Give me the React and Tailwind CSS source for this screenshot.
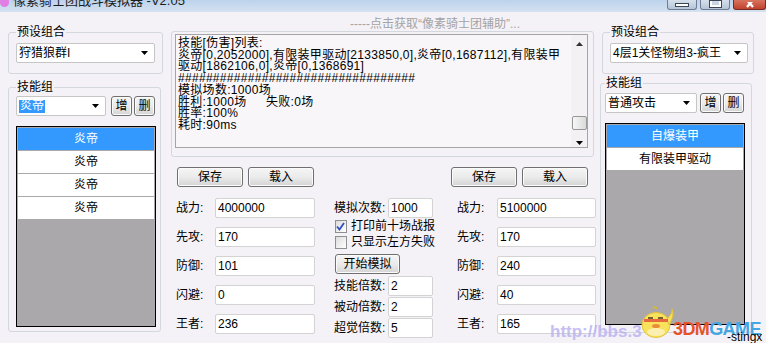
import React from "react";

const FONT = "font-['Liberation_Sans','Noto_Sans_CJK_SC',sans-serif]";

const LOG_LINES = [
  "技能[伤害]列表:",
  "炎帝[0,2052000],有限装甲驱动[2133850,0],炎帝[0,1687112],有限装甲",
  "驱动[1862106,0],炎帝[0,1368691]",
  "#".repeat(34),
  "模拟场数:1000场",
];

function Arrow() {
  return (
    <svg width="7" height="4" viewBox="0 0 7 4">
      <polygon points="0,0 7,0 3.5,4" fill="#000" />
    </svg>
  );
}

function Btn({ children, className = "" }) {
  return (
    <div
      className={`flex h-[20px] shrink-0 items-center justify-center rounded-[3px] border border-[#707070] bg-gradient-to-b from-[#f5f5f5] via-[#ebebeb] to-[#d4d4d4] text-[12px] text-black shadow-[inset_0_0_0_1px_#fbfbfb] ${className}`}
    >
      {children}
    </div>
  );
}

function Combo({ children, className = "" }) {
  return (
    <div
      className={`flex h-[20px] items-center justify-between rounded-[2px] border border-[#c6c6c6] bg-white pl-[2px] pr-[6px] text-[12px] ${className}`}
    >
      <span className="whitespace-nowrap">{children}</span>
      <Arrow />
    </div>
  );
}

function Field({ label, value, labelW, inputW }) {
  return (
    <div className="flex h-[20px] items-center">
      <span className="shrink-0 text-[12px]" style={{ width: labelW }}>
        {label}
      </span>
      <div
        className="h-[20px] rounded-[2px] border border-[#d3d3d3] bg-white pl-[2px] text-[12px] leading-[18px]"
        style={{ width: inputW }}
      >
        {value}
      </div>
    </div>
  );
}

function ListBox({ items, className = "" }) {
  return (
    <div className={`border border-black bg-[#aaa8ab] p-[1px] ${className}`}>
      <div className="flex flex-col gap-[1px]">
        {items.map((item, i) => (
          <div
            key={i}
            className={`flex h-[22px] items-center justify-center text-[12px] ${
              i === 0 ? "bg-[#3399ff] text-white" : "bg-white text-black"
            }`}
          >
            {item}
          </div>
        ))}
      </div>
    </div>
  );
}

function CheckRow({ checked, children }) {
  return (
    <div className="flex h-[16px] items-center pl-[1px]">
      <div className="flex h-[13px] w-[13px] items-center justify-center border border-[#8e8f8f] bg-gradient-to-br from-[#dcdcdc] to-[#ffffff]">
        {checked && (
          <svg width="9" height="9" viewBox="0 0 9 9">
            <path d="M1 4.5 L3.5 7.5 L8 1" fill="none" stroke="#2b4fc4" strokeWidth="1.8" />
          </svg>
        )}
      </div>
      <span className="ml-[4px] whitespace-nowrap text-[12px]">{children}</span>
    </div>
  );
}

function Chick() {
  return (
    <svg width="36" height="34" viewBox="0 0 36 34">
      <path d="M14 4 Q16 0 18 4" fill="none" stroke="#d9b92f" strokeWidth="1.5" />
      <ellipse cx="17" cy="20" rx="14" ry="12.5" fill="#f8e25c" stroke="#e4c33c" />
      <path d="M28 14 Q34 8 33 4 Q36 10 30 20 Z" fill="#f8e25c" stroke="#e4c33c" />
      <rect x="5" y="14" width="24" height="3" fill="#e4553a" opacity="0.85" />
      <path d="M9 13 L14 13 M19 13 L24 13" stroke="#4a3a20" strokeWidth="1.4" />
      <ellipse cx="17" cy="21" rx="4" ry="2" fill="#e98c3a" />
      <ellipse cx="17" cy="27" rx="9" ry="4" fill="#fbf0b0" />
    </svg>
  );
}

export default function App() {
  return (
    <div
      className={`relative h-[343px] w-[766px] overflow-hidden bg-[#f5f2f7] text-black ${FONT}`}
    >
      {/* title bar, top cut off */}
      <div className="flex h-[12px] overflow-hidden bg-gradient-to-b from-[#bcd2eb] to-[#d5e2f1]">
        <div className="-mt-[3px] h-[10px] w-[9px] shrink-0 rounded-full bg-[#e27de4]" />
        <div className="-mt-[7px] ml-[4px] whitespace-nowrap text-[13px] leading-[15px] text-[#1c1c1c]">
          像素骑士团战斗模拟器 -V2.05
        </div>
        <div className="flex-1" />
        <div className="flex items-start gap-[3px]">
          <div className="flex h-[10px] w-[30px] items-end justify-center rounded-b-[3px] border border-t-0 border-[#6e7d91] bg-gradient-to-b from-[#d6e0ec] to-[#b5c5d8] pb-[2px]">
            <div className="h-[4px] w-[14px] border border-[#3b4656] bg-white" />
          </div>
          <div className="flex h-[10px] w-[30px] items-end justify-center rounded-b-[3px] border border-t-0 border-[#6e7d91] bg-gradient-to-b from-[#d6e0ec] to-[#b5c5d8] pb-[2px]">
            <div className="h-[6px] w-[11px] border-[2px] border-t-0 border-white shadow-[0_0_0_1px_#3b4656]" />
          </div>
          <div className="flex h-[10px] w-[33px] items-end justify-center rounded-b-[3px] border border-t-0 border-[#7a2a20] bg-gradient-to-b from-[#d8735f] to-[#c0412c] pb-[1px]">
            <svg width="12" height="6" viewBox="0 0 12 6">
              <path d="M2 -3 L9 5 M10 -3 L3 5" stroke="#fff" strokeWidth="2.4" />
            </svg>
          </div>
        </div>
      </div>

      <div className="flex">
        {/* left column */}
        <div className="ml-[8px] flex w-[155px] shrink-0 flex-col">
          <fieldset className="mt-[13px] w-[155px] rounded-[3px] border border-[#d3d8df] pb-[10px] pl-[7px] pr-[7px] pt-[4px]">
            <legend className="px-[1px] text-[12px] leading-[14px]">预设组合</legend>
            <Combo className="w-[139px]">狩猎狼群I</Combo>
          </fieldset>
          <fieldset className="mt-[6px] w-[153px] rounded-[3px] border border-[#d3d8df] pb-[4px] pl-[7px] pr-[4px] pt-[2px]">
            <legend className="px-[1px] text-[12px] leading-[14px]">技能组</legend>
            <div className="flex">
              <div className="flex h-[20px] w-[90px] items-center justify-between rounded-[2px] border border-[#c6c6c6] bg-white pl-[2px] pr-[6px] text-[12px]">
                <span className="bg-[#3399ff] px-[1px] leading-[13px] text-white">炎帝</span>
                <Arrow />
              </div>
              <Btn className="ml-[5px] w-[21px]">增</Btn>
              <Btn className="ml-[2px] w-[21px] from-[#e4e4e4] to-[#cfcfcf]">删</Btn>
            </div>
            <ListBox
              className="mt-[10px] h-[201px] w-[140px]"
              items={["炎帝", "炎帝", "炎帝", "炎帝"]}
            />
          </fieldset>
        </div>

        {/* center column */}
        <div className="ml-[8px] flex w-[426px] shrink-0 flex-col">
          <div className="mt-[5px] h-[14px] whitespace-nowrap pl-[179px] text-[12px] leading-[14px] text-[#a3a3a3]">
            -----点击获取“像素骑士团辅助”...
          </div>
          <div className="h-[126px] w-[423px] rounded-[3px] border border-[#d3d8df] pl-[3px] pr-[5px] pt-[2px]">
            <div className="flex h-[114px] w-[413px] border border-[#a5a5a5] bg-[#f8f6f9]">
              <div className="w-[396px] overflow-hidden whitespace-nowrap pl-[2px] pt-[3px] text-[12px] leading-[11.7px] tracking-[0.3px]">
                {LOG_LINES.map((line, i) => (
                  <div key={i}>{line}</div>
                ))}
                <div>
                  <span className="inline-block w-[88px]">胜利:1000场</span>
                  失败:0场
                </div>
                <div>胜率:100%</div>
                <div>耗时:90ms</div>
              </div>
              <div className="flex w-[16px] flex-col items-center bg-[#f3f1f4]">
                <div className="mt-[7px]">
                  <svg width="7" height="4" viewBox="0 0 7 4">
                    <polygon points="3.5,0 7,4 0,4" fill="#333" />
                  </svg>
                </div>
                <div className="mt-[70px] h-[14px] w-[15px] rounded-[2px] border border-[#979797] bg-gradient-to-r from-[#f7f7f7] to-[#dadada]" />
                <div className="mt-[11px]">
                  <Arrow />
                </div>
              </div>
            </div>
          </div>

          <div className="mt-[10px] flex pl-[5px]">
            {/* A */}
            <div className="flex w-[139px] shrink-0 flex-col">
              <div className="flex gap-[5px] pl-[1px]">
                <Btn className="w-[66px]">保存</Btn>
                <Btn className="w-[66px]">载入</Btn>
              </div>
              <div className="mt-[11px] flex flex-col gap-[9px]">
                <Field label="战力:" value="4000000" labelW={39} inputW={100} />
                <Field label="先攻:" value="170" labelW={39} inputW={100} />
                <Field label="防御:" value="101" labelW={39} inputW={100} />
                <Field label="闪避:" value="0" labelW={39} inputW={100} />
                <Field label="王者:" value="236" labelW={39} inputW={100} />
              </div>
            </div>

            {/* B */}
            <div className="ml-[19px] flex w-[101px] shrink-0 flex-col pt-[31px]">
              <Field label="模拟次数:" value="1000" labelW={54} inputW={45} />
              <CheckRow checked>打印前十场战报</CheckRow>
              <CheckRow>只显示左方失败</CheckRow>
              <Btn className="ml-[1px] mt-[4px] w-[65px] border-[#3c7fb1] from-[#eef5fb] via-[#e0ecf6] to-[#c9dced]">
                开始模拟
              </Btn>
              <div className="mt-[2px] flex flex-col gap-[1px]">
                <Field label="技能倍数:" value="2" labelW={54} inputW={45} />
                <Field label="被动倍数:" value="2" labelW={54} inputW={45} />
                <Field label="超觉倍数:" value="5" labelW={54} inputW={45} />
              </div>
            </div>

            {/* C */}
            <div className="ml-[16px] flex w-[146px] shrink-0 flex-col">
              <div className="flex gap-[5px]">
                <Btn className="w-[66px]">保存</Btn>
                <Btn className="w-[66px]">载入</Btn>
              </div>
              <div className="mt-[11px] flex flex-col gap-[9px] pl-[6px]">
                <Field label="战力:" value="5100000" labelW={40} inputW={99} />
                <Field label="先攻:" value="170" labelW={40} inputW={99} />
                <Field label="防御:" value="240" labelW={40} inputW={99} />
                <Field label="闪避:" value="40" labelW={40} inputW={99} />
                <Field label="王者:" value="165" labelW={40} inputW={99} />
              </div>
            </div>
          </div>
        </div>

        {/* right column */}
        <div className="ml-[3px] flex w-[156px] shrink-0 flex-col">
          <fieldset className="ml-[2px] mt-[13px] w-[152px] rounded-[3px] border border-[#d3d8df] pb-[10px] pl-[7px] pr-[5px] pt-[4px]">
            <legend className="px-[1px] text-[12px] leading-[14px]">预设组合</legend>
            <Combo className="w-[138px]">4层1关怪物组3-疯王</Combo>
          </fieldset>
          <fieldset className="mt-[2px] w-[152px] rounded-[3px] border border-[#d3d8df] pb-[7px] pl-[4px] pr-[6px] pt-[3px]">
            <legend className="px-[1px] text-[12px] leading-[14px]">技能组</legend>
            <div className="flex">
              <Combo className="w-[92px]">普通攻击</Combo>
              <Btn className="ml-[3px] w-[21px]">增</Btn>
              <Btn className="ml-[2px] w-[21px] from-[#e4e4e4] to-[#cfcfcf]">删</Btn>
            </div>
            <ListBox
              className="mt-[10px] h-[202px] w-[140px]"
              items={["自爆装甲", "有限装甲驱动"]}
            />
          </fieldset>
        </div>
      </div>

      {/* forum watermark over the bottom right */}
      <div className="pointer-events-none absolute left-[550px] top-[319px] whitespace-nowrap font-['Liberation_Sans',sans-serif] text-[17px] font-bold text-[#b7b0f2] opacity-80">
        http://bbs.3
      </div>
      <div className="pointer-events-none absolute left-[639px] top-[305px]">
        <Chick />
      </div>
      <div className="pointer-events-none absolute left-[673px] top-[316px] whitespace-nowrap font-['Liberation_Sans',sans-serif] text-[18px] font-bold tracking-[-0.6px]">
        <span className="text-[#e5532c]">3DM</span>
        <span className="text-[#45a6e2]">GAME</span>
      </div>
      <div className="absolute left-[727px] top-[330px] text-[12px] leading-[14px]">-stingx</div>
    </div>
  );
}
